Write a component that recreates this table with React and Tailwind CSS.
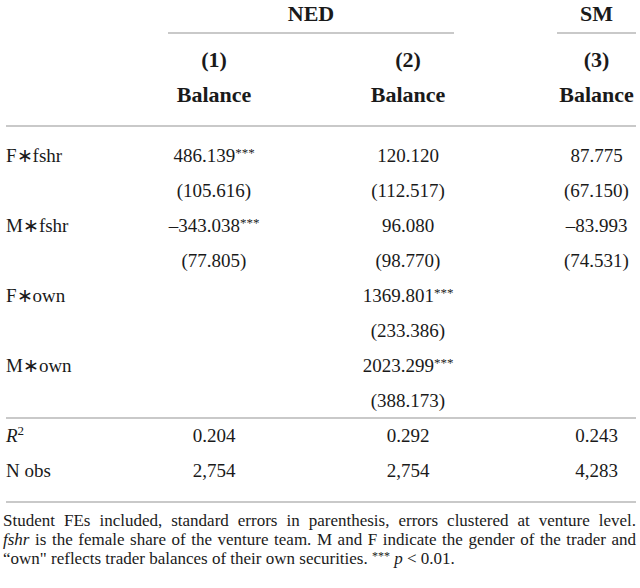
import React from 'react';

const serif = { fontFamily: '"Liberation Serif", "Times New Roman", serif' };

const rows = [
    { label: 'F∗fshr', vals: [['486.139', true], ['120.120'], ['87.775']] },
    { label: '', vals: [['(105.616)'], ['(112.517)'], ['(67.150)']] },
    { label: 'M∗fshr', vals: [['–343.038', true], ['96.080'], ['–83.993']] },
    { label: '', vals: [['(77.805)'], ['(98.770)'], ['(74.531)']] },
    { label: 'F∗own', vals: [[''], ['1369.801', true], ['']] },
    { label: '', vals: [[''], ['(233.386)'], ['']] },
    { label: 'M∗own', vals: [[''], ['2023.299', true], ['']] },
    { label: '', vals: [[''], ['(388.173)'], ['']] },
];

const Cell = ({ v }) => (
    <div className="flex items-center justify-center whitespace-nowrap">
        <span>
            {v[0]}
            {v[1] && <span className="relative -top-[5px] text-[13px] leading-none">***</span>}
        </span>
    </div>
);

const Row = ({ label, vals }) => (
    <div className="grid grid-cols-[162px_92px_102px_92px_103px_79px] h-[35px] items-center">
        <div>{label}</div>
        <Cell v={vals[0]} />
        <div />
        <Cell v={vals[1]} />
        <div />
        <Cell v={vals[2]} />
    </div>
);

const HeadCol = ({ n }) => (
    <div className="flex flex-col items-center">
        <div className="h-[35px] flex items-center">({n})</div>
        <div className="h-[35px] flex items-center">Balance</div>
    </div>
);

export default function App() {
    return (
        <div className="w-[640px] h-[588px] bg-white text-[#1a1a1a] overflow-hidden" style={serif}>
            <div className="ml-[6px] w-[630px] text-[19px]">
                {/* group headers */}
                <div className="grid grid-cols-[162px_286px_103px_79px] text-[22px] leading-none font-bold">
                    <div />
                    <div className="flex flex-col">
                        <div className="h-[32px] pt-[3px] text-center">NED</div>
                        <div className="h-[2px] bg-[#c9c9c9]" />
                    </div>
                    <div />
                    <div className="flex flex-col">
                        <div className="h-[32px] pt-[3px] text-center">SM</div>
                        <div className="h-[2px] bg-[#c9c9c9]" />
                    </div>
                </div>
                <div className="grid grid-cols-[162px_92px_102px_92px_103px_79px] font-bold text-[22px] pt-[8px]">
                    <div />
                    <HeadCol n={1} />
                    <div />
                    <HeadCol n={2} />
                    <div />
                    <HeadCol n={3} />
                </div>
                <div className="h-[2px] bg-[#c9c9c9] mt-[13px]" />
                <div className="pt-[12px]">
                    {rows.map((r, i) => (
                        <Row key={i} {...r} />
                    ))}
                </div>
                <div className="h-[2px] bg-[#c9c9c9] -mt-[2px]" />
                <Row
                    label={
                        <span>
                            <i>R</i>
                            <sup className="text-[13px] -top-[7px]">2</sup>
                        </span>
                    }
                    vals={[['0.204'], ['0.292'], ['0.243']]}
                />
                <Row label="N obs" vals={[['2,754'], ['2,754'], ['4,283']]} />
                <div className="h-[2px] bg-[#c9c9c9] mt-[12px]" />
            </div>
            <div className="ml-[3px] w-[633px] text-[17px] leading-[19px] mt-[8px]">
                <div className="text-justify [text-align-last:justify]">
                    Student FEs included, standard errors in parenthesis, errors clustered at venture level.
                </div>
                <div className="text-justify [text-align-last:justify]">
                    <i>fshr</i> is the female share of the venture team. M and F indicate the gender of the trader and
                </div>
                <div>
                    “own" reflects trader balances of their own securities.{' '}
                    <span className="relative -top-[4px] text-[12px]">***</span> <i>p</i> &lt; 0.01.
                </div>
            </div>
        </div>
    );
}
